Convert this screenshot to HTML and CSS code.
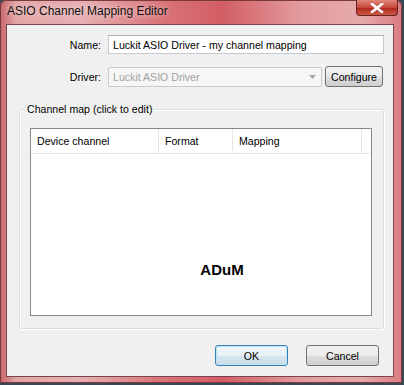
FILE: index.html
```html
<!DOCTYPE html>
<html lang="en">
<head>
    <meta charset="UTF-8">
    <title>ASIO Channel Mapping Editor</title>
    <link rel="stylesheet" href="styles.css">
</head>
<body>
    <div class="window">
        <div class="titlebar">
            <span class="title">ASIO Channel Mapping Editor</span>
            <div class="close-btn">
                <svg width="14" height="10" viewBox="0 0 14 10">
                    <path d="M2 1 L12 9 M12 1 L2 9" stroke="#fff" stroke-width="2.6" stroke-linecap="square"/>
                </svg>
            </div>
        </div>

        <div class="client">
            <div class="form-row name-row">
                <label class="label">Name:</label>
                <div class="textbox">Luckit ASIO Driver - my channel mapping</div>
            </div>

            <div class="form-row driver-row">
                <label class="label">Driver:</label>
                <div class="combo">
                    <span>Luckit ASIO Driver</span>
                    <svg width="7" height="4" viewBox="0 0 7 4"><path d="M0 0 H7 L3.5 4 Z" fill="#a8a8a8"/></svg>
                </div>
                <button class="btn configure">Configure</button>
            </div>

            <fieldset class="group">
                <legend>Channel map (click to edit)</legend>
                <div class="listview">
                    <div class="lv-header">
                        <div class="col col-device">Device channel</div>
                        <div class="col col-format">Format</div>
                        <div class="col col-mapping">Mapping</div>
                        <div class="col col-rest"></div>
                    </div>
                    <div class="lv-body">
                        <span class="watermark">ADuM</span>
                    </div>
                </div>
            </fieldset>

            <div class="dialog-buttons">
                <button class="btn btn-default">OK</button>
                <button class="btn cancel">Cancel</button>
            </div>
        </div>
    </div>
</body>
</html>
```

FILE: styles.css
```css
body {
    margin: 0;
    width: 404px;
    height: 385px;
    background-color: #3a4656;
    font-family: "Liberation Sans", Arial, sans-serif;
    font-size: 10.6px;
    overflow: hidden;
}
.window {
    width: 402px;
    height: 383px;
    padding: 0 8px 6px 6px;
    box-sizing: border-box;
    background: linear-gradient(90deg, #c8666a 0%, #e2a4a6 4%, #e6b0b2 20%, #d97478 40%, #d25e64 55%, #e39c9e 75%, #e6aaac 90%, #d97c80 100%);
    border-radius: 6px 6px 0 0;
    box-shadow: inset 0 0 0 1px #7a3a3c;
}
.titlebar {
    height: 24px;
    display: flex;
    justify-content: space-between;
    align-items: flex-start;
}
.title {
    margin: 4px 0 0 1px;
    color: #111;
    font-size: 12px;
    text-shadow: 0 0 6px rgba(255, 255, 255, 0.8);
}
.close-btn {
    width: 42px;
    height: 16px;
    margin-right: -4px;
    box-sizing: border-box;
    border: 1px solid #6a2220;
    border-top: none;
    border-radius: 0 0 4px 4px;
    background: linear-gradient(#e0877c, #c8473c 50%, #b0281e 55%, #d05a48);
    display: flex;
    align-items: center;
    justify-content: center;
}
.client {
    height: 353px;
    box-sizing: border-box;
    background-color: #f0f0f0;
    border: 1px solid #7a4448;
    padding: 10px 9px 0 0;
}
.form-row {
    display: flex;
    align-items: center;
}
.label {
    width: 94px;
    text-align: right;
    margin-right: 7px;
    color: #000;
}
.textbox {
    width: 276px;
    height: 19px;
    box-sizing: border-box;
    background: #fff;
    border: 1px solid #c5cbd4;
    border-top-color: #abadb3;
    padding: 2px 4px;
    line-height: 14px;
}
.driver-row {
    margin-top: 12px;
}
.combo {
    width: 214px;
    height: 20px;
    box-sizing: border-box;
    border: 1px solid #c8ccd2;
    background: #f6f6f6;
    color: #a2a2a2;
    display: flex;
    align-items: center;
    justify-content: space-between;
    padding: 0 5px 0 4px;
    border-radius: 2px;
}
.btn {
    font-family: "Liberation Sans", Arial, sans-serif;
    font-size: 10.6px;
    color: #000;
    height: 21px;
    box-sizing: border-box;
    border: 1px solid #707070;
    border-radius: 3px;
    background: linear-gradient(#f2f2f2 0%, #ebebeb 50%, #dddddd 51%, #cfcfcf 100%);
    padding: 0;
}
.configure {
    width: 58px;
    margin-left: 3px;
}
.group {
    margin: 16px 0 0 12px;
    width: 365px;
    height: 226px;
    box-sizing: border-box;
    border: 1px solid #d5dfe5;
    border-radius: 3px;
    padding: 0 4px 0 10px;
    box-shadow: inset 1px 1px 0 #fff, 1px 1px 0 #fff;
}
.group legend {
    padding: 0 2px;
    margin-left: -5px;
    color: #000;
}
.listview {
    margin-top: 13px;
    width: 342px;
    height: 188px;
    box-sizing: border-box;
    border: 1px solid #828790;
    background: #fff;
    display: flex;
    flex-direction: column;
}
.lv-header {
    height: 24px;
    display: flex;
    border-bottom: 1px solid #e5e5e5;
}
.col {
    box-sizing: border-box;
    border-right: 1px solid #e5e5e5;
    padding: 6px 0 0 6px;
    color: #000;
}
.col-device { width: 128px; }
.col-format { width: 74px; }
.col-mapping { width: 129px; }
.col-rest { flex: 1; border-right: none; }
.lv-body {
    flex: 1;
    display: flex;
    align-items: center;
    justify-content: center;
}
.watermark {
    font-weight: bold;
    font-size: 15px;
    margin: 70px 0 0 42px;
}
.dialog-buttons {
    display: flex;
    justify-content: flex-end;
    gap: 18px;
    margin-top: 16px;
    padding-right: 5px;
}
.dialog-buttons .btn {
    width: 73px;
}
.btn-default {
    border-color: #3c7fb1;
    box-shadow: inset 0 0 0 1px #b9e4f8;
    background: linear-gradient(#f0f7fb 0%, #e6f0f6 50%, #d7e5ee 51%, #c9dce8 100%);
}
```
